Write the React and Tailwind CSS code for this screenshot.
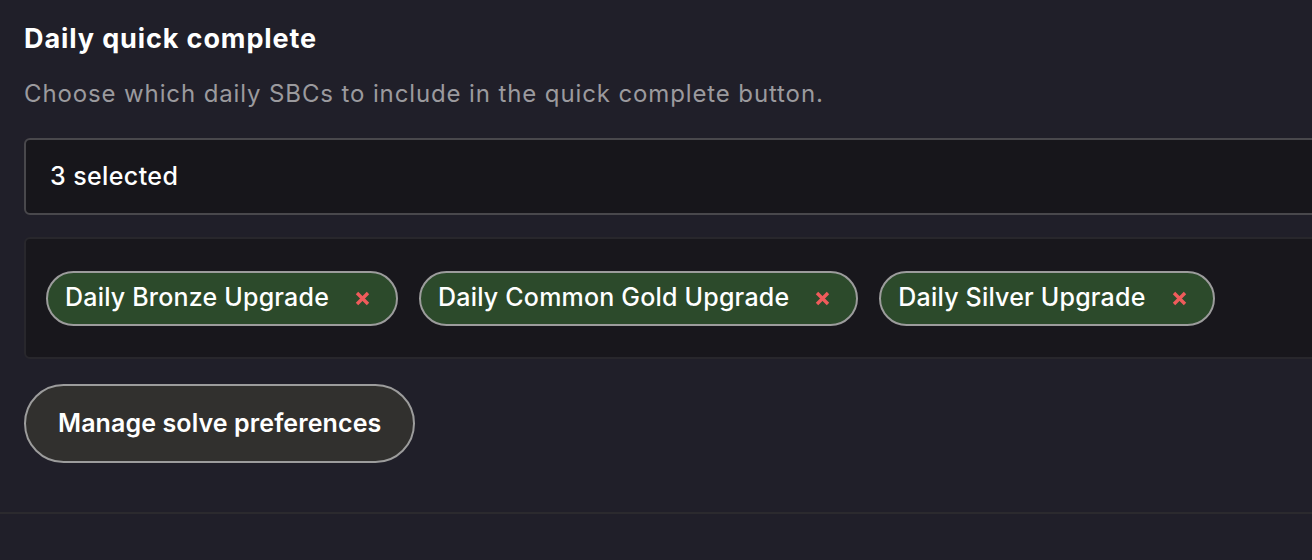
const selecionados = [
  "Daily Bronze Upgrade",
  "Daily Common Gold Upgrade",
  "Daily Silver Upgrade",
];

function IconeRemover() {
  return (
    <svg width="15" height="15" viewBox="0 0 15 15" className="ml-[26px] shrink-0">
      <path d="M2 2 L13 13 M13 2 L2 13" stroke="#ef5b5b" strokeWidth="3.4" />
    </svg>
  );
}

function Chip({ label }) {
  return (
    <div className="flex h-[55px] items-center rounded-full border-2 border-[#9c9c9c] bg-[#2c4a2b] pl-[17px] pr-[26px]">
      <span className="text-[25px] font-medium tracking-[0.2px] text-white">{label}</span>
      <IconeRemover />
    </div>
  );
}

export default function App() {
  return (
    <div
      className="h-[560px] w-[1312px] overflow-hidden bg-[#201f29]"
      style={{ fontFamily: "Inter, 'Noto Sans', sans-serif" }}
    >
      <div className="w-[1400px] pb-[49px] pl-[24px] pt-[22px]">
        <h1 className="text-[27px] font-bold leading-[34px] tracking-[0.9px] text-white">
          Daily quick complete
        </h1>
        <p className="mt-[23px] text-[24px] leading-[30px] tracking-[0.88px] text-[#9b9a9e]">
          Choose which daily SBCs to include in the quick complete button.
        </p>
        <div className="mt-[29px] flex h-[77px] items-center rounded-[6px] border-2 border-[#49484c] bg-[#17161b] px-[24px]">
          <span className="text-[25px] font-medium tracking-[0.4px] text-white">3 selected</span>
        </div>
        <div className="mt-[22px] flex h-[122px] items-center gap-[21px] rounded-[6px] border-2 border-[#28272c] bg-[#18171c] px-[20px]">
          {selecionados.map((s) => (
            <Chip key={s} label={s} />
          ))}
        </div>
        <button className="mt-[25px] flex h-[79px] items-center rounded-full border-2 border-[#9c9c9c] bg-[#31302e] px-[32px] text-[25px] font-semibold tracking-[0.1px] text-white">
          Manage solve preferences
        </button>
      </div>
      <div className="h-[2px] w-full bg-[#2b2a2e]" />
    </div>
  );
}
